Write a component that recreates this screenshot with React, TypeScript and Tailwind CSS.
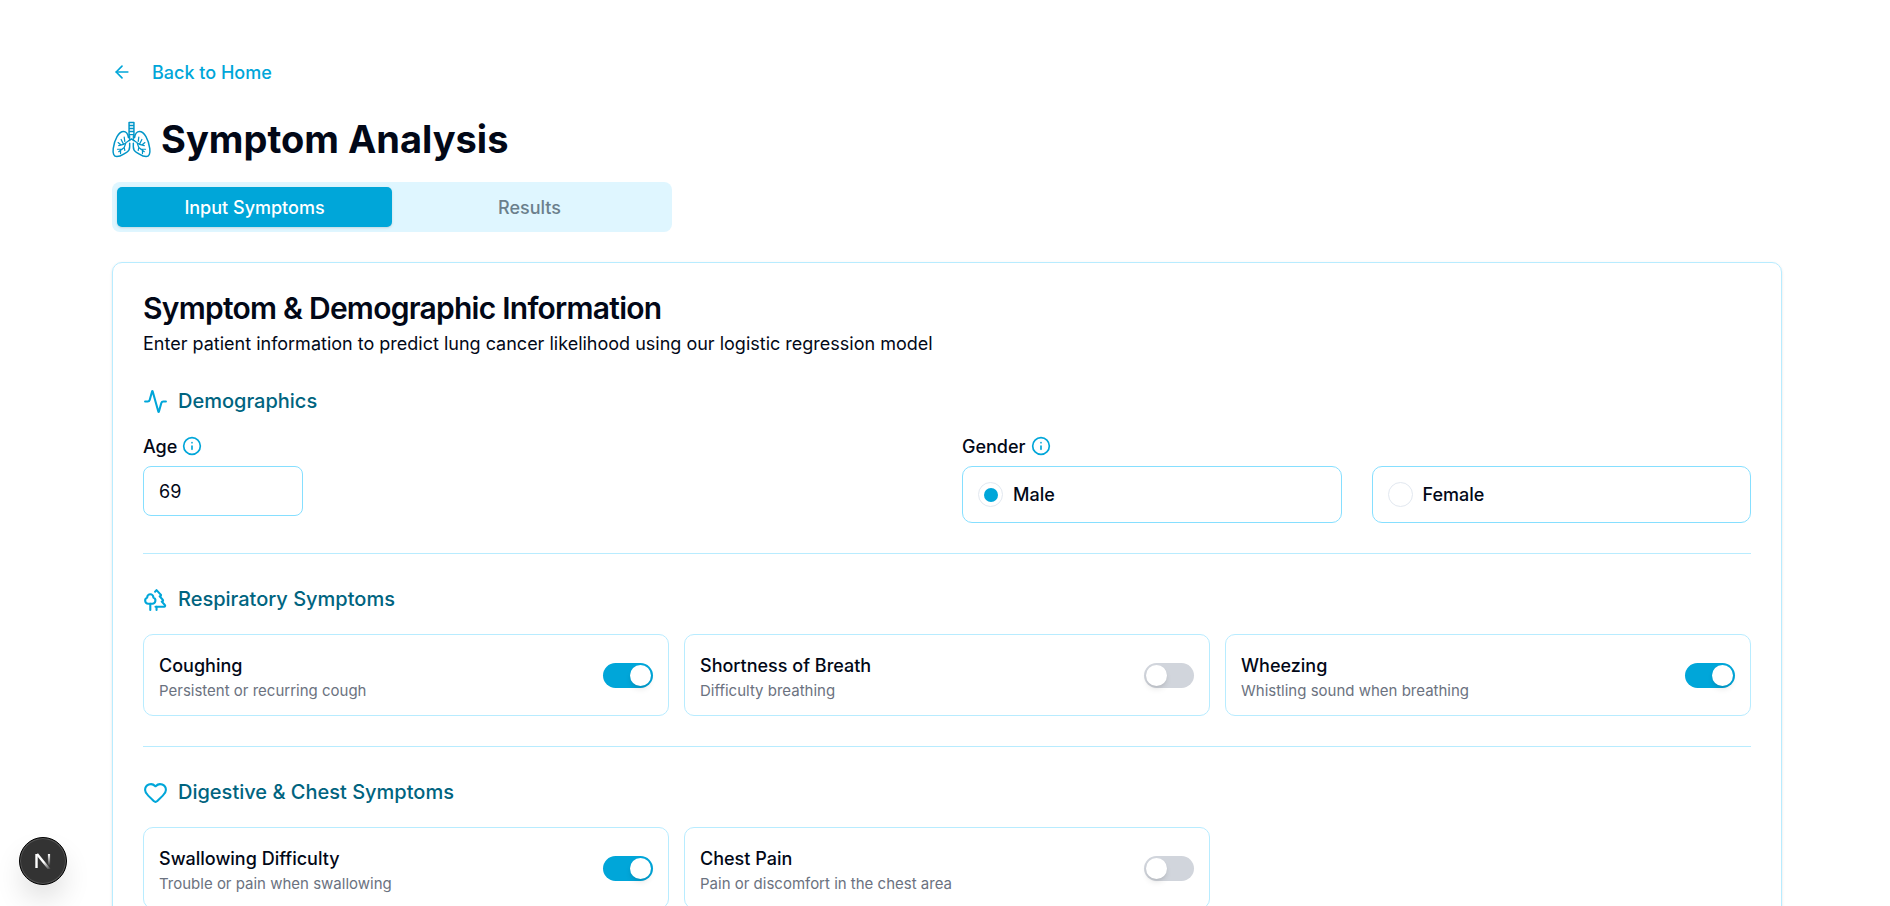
import { useState, type ReactNode } from "react";
import { Activity, ArrowLeft, Heart, Info, Trees } from "lucide-react";

function LungsIcon() {
  const half = (
    <>
      <path strokeWidth="2.4" d="M27 27c-1-6-4-10-8-10C11 17 4 30 2 45c-1 8 1 13 6 13 7 0 10-4 16-7 4-2 5-5 5-9v-6" />
      <path d="M29 24v7l-10 7-8 2M23 35l-3 8-9 7M20 43l1 5M15 39l-5-4M19 38l-4-8M21 33l-1-7M17 46l-8 0M14 48l0 5M25 34l3-3" />
    </>
  );
  return (
    <svg viewBox="0 0 64 60" className="h-[37px] w-[39px] shrink-0" fill="none" stroke="currentColor" strokeWidth="2" strokeLinecap="round" strokeLinejoin="round" aria-hidden="true">
      {half}
      <g transform="translate(64 0) scale(-1 1)">{half}</g>
      <path strokeWidth="2.4" d="M28 26V2h8v24M28 7h8M28 12h8M28 17h8M28 22h8M28 32l4-3 4 3" />
    </svg>
  );
}

function SectionTitle({ icon, children }: { icon: ReactNode; children: ReactNode }) {
  return (
    <h3 className="mb-5 flex items-center gap-[10px] text-[20px] leading-[30px] font-medium text-[#00647f]">
      <span className="text-[#00a6d9]">{icon}</span>
      {children}
    </h3>
  );
}

function SymptomCard({ id, title, text, on }: { id: string; title: string; text: string; on?: boolean }) {
  const [checked, setChecked] = useState(!!on);
  return (
    <div className="flex items-center justify-between rounded-[10px] border border-[#b8ecff] p-[15px]">
      <div>
        <label htmlFor={id} className="block text-[18px] leading-[31px] font-medium">
          {title}
        </label>
        <p className="text-[15px] leading-[19px] text-[#6b7280]">{text}</p>
      </div>
      <input
        id={id}
        type="checkbox"
        role="switch"
        checked={checked}
        onChange={(e) => setChecked(e.target.checked)}
        className="flex h-[25px] w-[50px] shrink-0 cursor-pointer appearance-none items-center rounded-full bg-[#d1d5dc] px-[2px] before:size-[21px] before:rounded-full before:bg-white before:shadow-md checked:justify-end checked:bg-[#00a6d9]"
      />
    </div>
  );
}

function GenderOption({ value, label, on }: { value: string; label: string; on?: boolean }) {
  return (
    <label className="flex h-[57px] items-center gap-[10px] rounded-[10px] border border-[#86dfff] px-[15px] text-[18px] font-medium">
      <input
        type="radio"
        name="gender"
        value={value}
        defaultChecked={on}
        className="grid size-[25px] appearance-none place-items-center rounded-full border border-[#e2e8f0] before:size-[14px] before:rounded-full checked:before:bg-[#00a6d9]"
      />
      {label}
    </label>
  );
}

export default function App() {
  return (
    <div className="min-h-screen bg-white pt-[60px] pr-27 pb-10 pl-28 font-['Inter',sans-serif] text-[#020817]">
      <a href="#home" className="flex h-6 w-fit items-center gap-5 text-[18px] font-medium text-[#00a6d9]">
        <ArrowLeft className="size-5" />
        Back to Home
      </a>
      <h1 className="mt-[33px] mb-[21px] flex h-11 items-center gap-[10px] text-[38px] leading-[44px] font-bold">
        <span className="text-[#0095c8]">
          <LungsIcon />
        </span>
        Symptom Analysis
      </h1>
      <div role="tablist" className="grid h-[50px] w-[560px] grid-cols-2 rounded-lg bg-[#dff6ff] p-[5px] text-[18px] font-medium">
        <button role="tab" aria-selected="true" className="rounded-[5px] bg-[#00a6d9] text-white shadow-sm">
          Input Symptoms
        </button>
        <button role="tab" aria-selected="false" className="rounded-[5px] text-[#6b7f8c]">
          Results
        </button>
      </div>

      <main className="mt-[30px] rounded-[10px] border border-[#b8ecff] p-[30px] shadow-sm">
        <h2 className="mb-2 text-[30px] leading-[30px] font-semibold tracking-tight">Symptom &amp; Demographic Information</h2>
        <p className="mb-[30px] text-[18px] leading-[25px]">
          Enter patient information to predict lung cancer likelihood using our logistic regression model
        </p>

        <section>
          <SectionTitle icon={<Activity className="size-[25px]" />}>Demographics</SectionTitle>
          <div className="grid grid-cols-2 gap-[30px]">
            <div>
              <div className="mb-[10px] flex h-5 items-center gap-[5px] text-[18px] font-medium">
                <label htmlFor="age">Age</label>
                <Info className="size-5 text-[#00a6d9]" />
              </div>
              <input id="age" defaultValue="69" inputMode="numeric" className="block h-[50px] w-40 rounded-lg border border-[#86dfff] px-[15px] text-[18px]" />
            </div>
            <fieldset>
              <legend className="mb-[10px] flex h-5 items-center gap-[5px] text-[18px] font-medium">
                Gender
                <Info className="size-5 text-[#00a6d9]" />
              </legend>
              <div className="grid grid-cols-2 gap-[30px]">
                <GenderOption value="male" label="Male" on />
                <GenderOption value="female" label="Female" />
              </div>
            </fieldset>
          </div>
        </section>

        <hr className="my-[30px] border-[#b8ecff]" />

        <section>
          <SectionTitle icon={<Trees className="size-[25px]" />}>Respiratory Symptoms</SectionTitle>
          <div className="grid grid-cols-3 gap-[15px]">
            <SymptomCard id="coughing" title="Coughing" text="Persistent or recurring cough" on />
            <SymptomCard id="breath" title="Shortness of Breath" text="Difficulty breathing" />
            <SymptomCard id="wheezing" title="Wheezing" text="Whistling sound when breathing" on />
          </div>
        </section>

        <hr className="my-[30px] border-[#b8ecff]" />

        <section>
          <SectionTitle icon={<Heart className="size-[25px]" />}>Digestive &amp; Chest Symptoms</SectionTitle>
          <div className="grid grid-cols-3 gap-[15px]">
            <SymptomCard id="swallowing" title="Swallowing Difficulty" text="Trouble or pain when swallowing" on />
            <SymptomCard id="chest" title="Chest Pain" text="Pain or discomfort in the chest area" />
          </div>
        </section>
      </main>

      <button
        aria-label="Open developer tools"
        className="fixed bottom-[21px] left-[19px] grid size-12 place-items-center rounded-full border border-black bg-[#333] shadow-[inset_0_0_0_1px_#555,0_16px_32px_-8px_rgba(0,0,0,0.24)]"
      >
        <svg viewBox="0 0 16 16" className="size-4" fill="none" aria-hidden="true">
          <defs>
            <linearGradient id="diagonal" x1="9" y1="9" x2="15" y2="17" gradientUnits="userSpaceOnUse">
              <stop stopColor="#fff" />
              <stop offset="1" stopColor="#fff" stopOpacity="0" />
            </linearGradient>
            <linearGradient id="stem" x1="14" y1="1" x2="14" y2="13" gradientUnits="userSpaceOnUse">
              <stop stopColor="#fff" />
              <stop offset="1" stopColor="#fff" stopOpacity="0" />
            </linearGradient>
          </defs>
          <path d="M2 1l13 16" stroke="url(#diagonal)" strokeWidth="2.4" />
          <path d="M1.5 15V1" stroke="#fff" strokeWidth="2.4" />
          <path d="M14 1v13" stroke="url(#stem)" strokeWidth="2.2" />
        </svg>
      </button>
    </div>
  );
}
